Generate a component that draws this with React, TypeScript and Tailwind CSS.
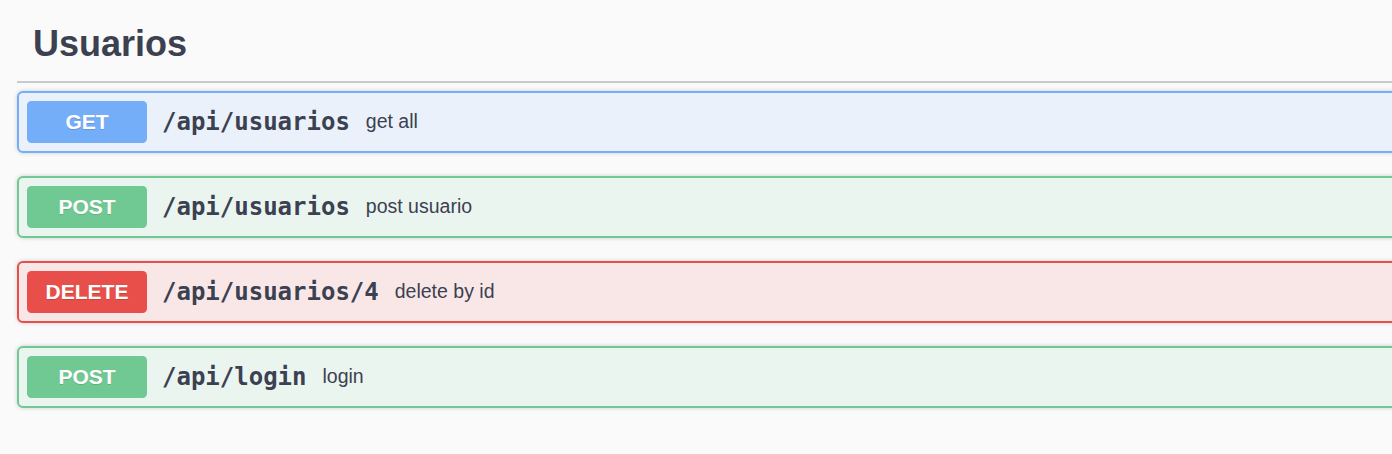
import React from "react";

type Op = { method: string; path: string; desc: string; badge: string; border: string; bg: string };

const ops: Op[] = [
  { method: "GET", path: "/api/usuarios", desc: "get all", badge: "bg-[#74adf8]", border: "border-[#74adf8]", bg: "bg-[#eaf1fa]" },
  { method: "POST", path: "/api/usuarios", desc: "post usuario", badge: "bg-[#70c893]", border: "border-[#70c893]", bg: "bg-[#ebf5ef]" },
  { method: "DELETE", path: "/api/usuarios/4", desc: "delete by id", badge: "bg-[#e84f4a]", border: "border-[#e84f4a]", bg: "bg-[#f9e7e7]" },
  { method: "POST", path: "/api/login", desc: "login", badge: "bg-[#70c893]", border: "border-[#70c893]", bg: "bg-[#ebf5ef]" },
];

export default function App() {
  return (
    <div className="w-[1392px] h-[454px] overflow-hidden bg-[#fafafa] text-[#3b4151]">
      <div className="ml-[17px] w-[1400px]">
        <div className="h-[83px] box-border pt-[23px] pl-[16px] border-b-2 border-[#c9cacd]">
          <h3 className="text-[36px] leading-[42px] font-bold font-['Liberation_Sans',Arial,sans-serif] text-[#3b4151]">
            Usuarios
          </h3>
        </div>
        <div className="pt-[8px] flex flex-col gap-[23px]">
          {ops.map((op, i) => (
            <div
              key={i}
              className={`h-[62px] box-border border-2 rounded-[6px] shadow-[0_0_4px_rgba(0,0,0,0.19)] flex items-center px-[8px] ${op.border} ${op.bg}`}
            >
              <div
                className={`w-[120px] h-[42px] rounded-[4.5px] flex items-center justify-center text-white font-bold text-[21px] font-['Liberation_Sans',Arial,sans-serif] [text-shadow:0_1px_0_rgba(0,0,0,0.15)] ${op.badge}`}
              >
                {op.method}
              </div>
              <span className="ml-[15px] font-['DejaVu_Sans_Mono',monospace] font-bold text-[24px] text-[#3b4151]">
                {op.path}
              </span>
              <span className="ml-[16px] font-['Liberation_Sans',Arial,sans-serif] text-[19.5px] text-[#3b4151]">
                {op.desc}
              </span>
            </div>
          ))}
        </div>
      </div>
    </div>
  );
}
